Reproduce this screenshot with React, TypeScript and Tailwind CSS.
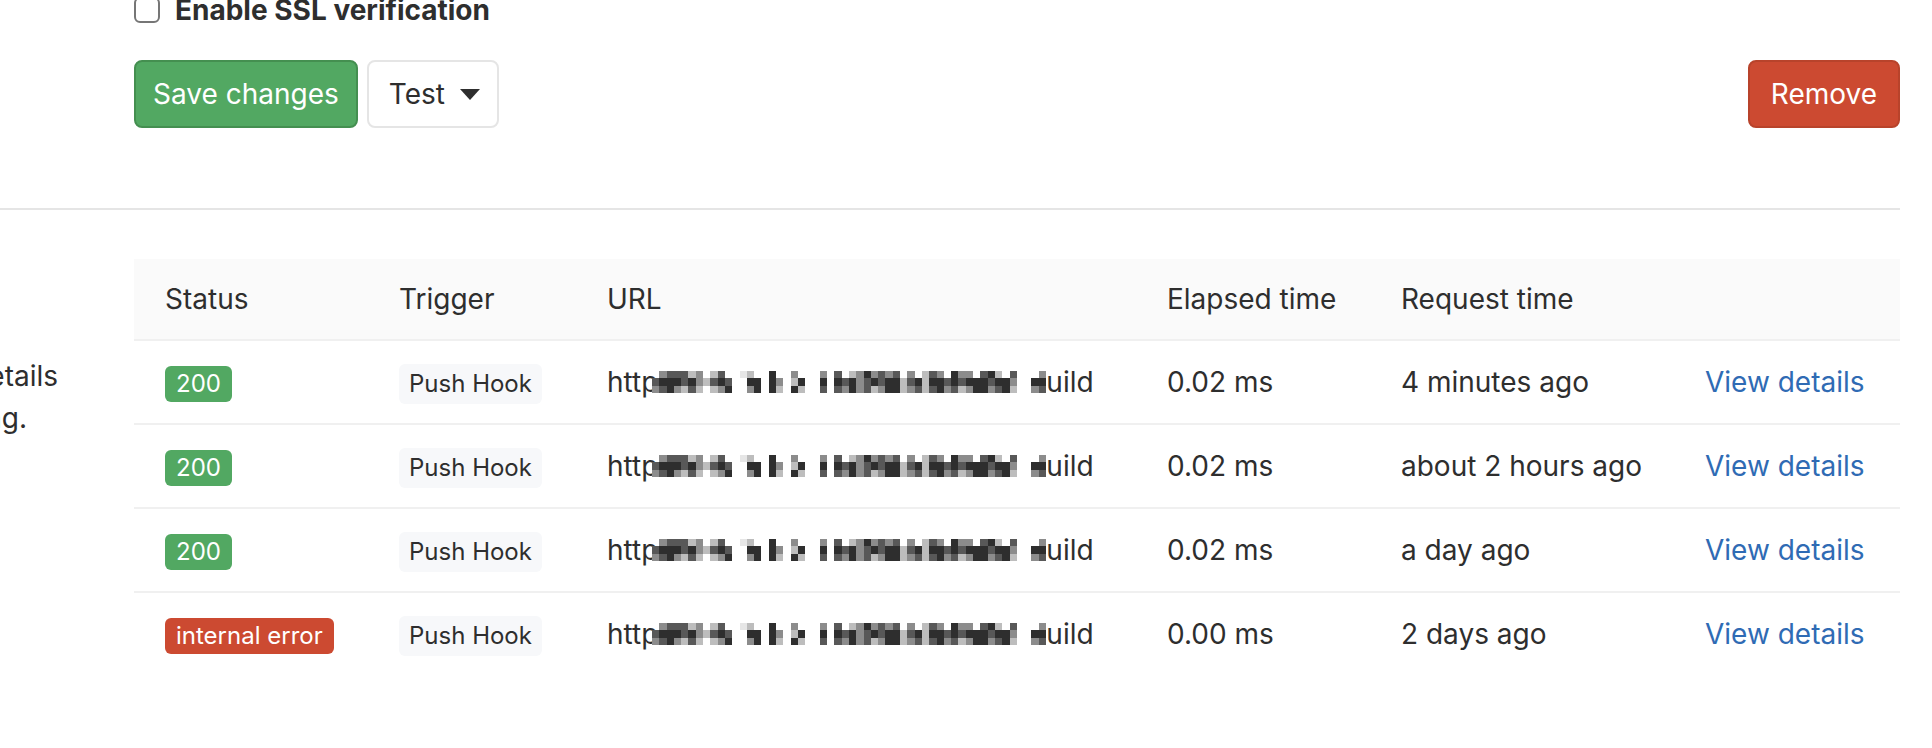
import React from "react";

const shades = ["#ffffff", "#e6e6e6", "#bdbdbd", "#8c8c8c", "#585858", "#2e2e2e"];

// pixelated (redacted) part of the hook url
const mosaic = [
  "034442302400120050030003040235343403024305330452040003",
  "455545324540055053025005054534545524525545455545530055",
  "345324202350035052052004043534235523424534235534520034",
];

function Mosaic() {
  return (
    <svg
      width="394"
      height="22"
      viewBox="0 0 54 3"
      preserveAspectRatio="none"
      shapeRendering="crispEdges"
      className="block shrink-0"
    >
      {mosaic.map((row, y) =>
        row
          .padEnd(54, "0")
          .slice(0, 54)
          .split("")
          .map((c, x) =>
            c === "0" ? null : (
              <rect key={`${x}-${y}`} x={x} y={y} width="1" height="1" fill={shades[Number(c)]} />
            )
          )
      )}
    </svg>
  );
}

const events = [
  { status: "200", ok: true, elapsed: "0.02 ms", when: "4 minutes ago" },
  { status: "200", ok: true, elapsed: "0.02 ms", when: "about 2 hours ago" },
  { status: "200", ok: true, elapsed: "0.02 ms", when: "a day ago" },
  { status: "internal error", ok: false, elapsed: "0.00 ms", when: "2 days ago" },
];

const cols = "grid grid-cols-[234px_208px_560px_234px_304px_1fr] items-center";

export default function App() {
  return (
    <div
      className="flex flex-col h-[748px] overflow-hidden bg-white text-[#2e2e2e] text-[28px]"
      style={{ fontFamily: "Inter, 'Liberation Sans', sans-serif" }}
    >
      {/* Form bottom */}
      <div className="flex -mt-[10px]">
        <div className="w-[134px] shrink-0" />
        <div className="flex-1 mr-[32px]">
          <label className="flex items-center gap-[15px] h-[40px] leading-[40px] font-bold">
            <span className="w-[26px] h-[26px] rounded-[6px] border-2 border-[#767676] bg-white" />
            Enable SSL verification
          </label>

          <div className="flex mt-[30px]">
            <button className="h-[68px] px-[17px] rounded-[8px] border-2 border-[#448f50] bg-[#52a862] text-white">
              Save changes
            </button>
            <button className="ml-[9px] h-[68px] pl-[20px] pr-[17px] rounded-[8px] border-2 border-[#e5e5e5] bg-white flex items-center gap-[15px]">
              Test
              <svg width="20" height="11" viewBox="0 0 20 11">
                <polygon points="0,0 20,0 10,11" fill="#2e2e2e" />
              </svg>
            </button>
            <button className="ml-auto h-[68px] px-[21px] rounded-[8px] border-2 border-[#b8432b] bg-[#cc4a31] text-white">
              Remove
            </button>
          </div>
        </div>
      </div>

      <div className="mt-[80px] h-[2px] bg-[#e5e5e5] mr-[32px] shrink-0" />

      {/* Recent deliveries */}
      <div className="flex mt-[49px]">
        <div className="w-[134px] shrink-0">
          <div className="w-[58px] overflow-hidden pt-[96px] leading-[42px]">
            <div className="flex justify-end whitespace-nowrap">
              When an event in GitLab triggers a webhook, you can use the request details
            </div>
            <div className="flex justify-end whitespace-nowrap pr-[31px]">
              to figure out if something went wrong.
            </div>
          </div>
        </div>

        <div className="flex-1 mr-[32px]">
          <div className={`${cols} h-[82px] bg-[#fafafa] border-b-2 border-[#f0f0f0]`}>
            <div className="pl-[31px]">Status</div>
            <div className="pl-[31px]">Trigger</div>
            <div className="pl-[31px]">URL</div>
            <div className="pl-[31px]">Elapsed time</div>
            <div className="pl-[31px]">Request time</div>
            <div />
          </div>

          {events.map((e, i) => (
            <div
              key={i}
              className={`${cols} ${i < events.length - 1 ? "h-[84px] border-b-2 border-[#f0f0f0]" : "h-[82px]"}`}
            >
              <div className="pl-[31px]">
                <span
                  className={`inline-block h-[36px] leading-[36px] px-[11px] rounded-[6px] text-[24px] text-white ${
                    e.ok ? "bg-[#52a862]" : "bg-[#cc4a31]"
                  }`}
                >
                  {e.status}
                </span>
              </div>
              <div className="pl-[31px]">
                <span className="inline-block h-[40px] leading-[40px] px-[10px] rounded-[6px] text-[24px] bg-[#f7f8fa]">
                  Push Hook
                </span>
              </div>
              <div className="pl-[31px] flex items-center whitespace-nowrap">
                <span>http</span>
                <span className="-ml-[6px]">
                  <Mosaic />
                </span>
                <span>uild</span>
              </div>
              <div className="pl-[31px]">{e.elapsed}</div>
              <div className="pl-[31px]">{e.when}</div>
              <div className="pl-[31px]">
                <a href="#" className="text-[#2f6bb4]">
                  View details
                </a>
              </div>
            </div>
          ))}
        </div>
      </div>
    </div>
  );
}
